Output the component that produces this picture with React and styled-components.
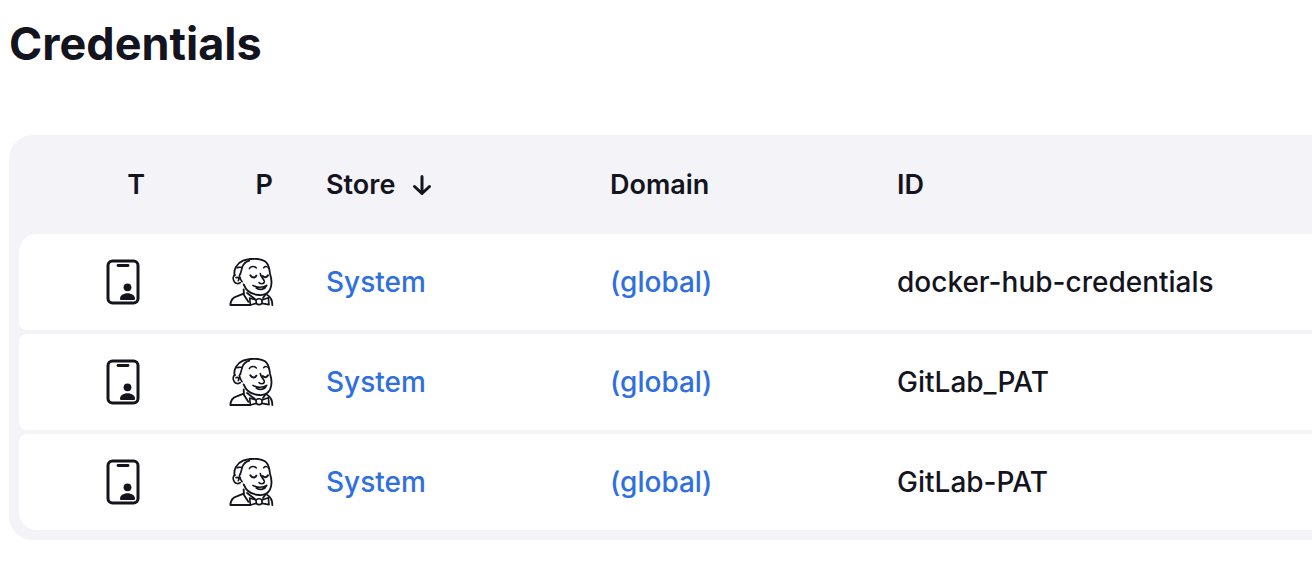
import React from "react";
import styled, { createGlobalStyle } from "styled-components";

const GlobalStyle = createGlobalStyle`
  * { box-sizing: border-box; }
  body {
    margin: 0;
    background: #fff;
    color: #14141f;
    font-family: Inter, "Liberation Sans", sans-serif;
    font-size: 28px;
    font-weight: 500;
    line-height: 36px;
  }
`;

const Page = styled.main`
  padding: 12px 0 26px 9px;
`;

const Title = styled.h1`
  margin: 0 0 59px;
  font-size: 45px;
  font-weight: 700;
  line-height: 64px;
`;

const Panel = styled.section`
  padding: 0 0 6px 10px;
  background: #f3f3f8;
  border-radius: 24px 0 0 24px;
`;

const Table = styled.table`
  width: 100%;
  table-layout: fixed;
  border-collapse: separate;
  border-spacing: 0 4px;
`;

const Column = styled.col`
  width: ${({ $width }) => $width};
`;

const HeaderCell = styled.th`
  height: 91px;
  padding: 0 0 0 ${({ $inset }) => $inset || "16px"};
  font-size: 27px;
  font-weight: 600;
  text-align: left;
`;

const SortButton = styled.button`
  display: flex;
  align-items: center;
  justify-content: ${({ $narrow }) => ($narrow ? "flex-end" : "flex-start")};
  gap: 15px;
  width: ${({ $narrow }) => ($narrow ? "46px" : "auto")};
  padding: 0;
  border: 0;
  background: none;
  color: inherit;
  font: inherit;
  cursor: pointer;
`;

const Cell = styled.td`
  height: 96px;
  padding: 0 0 0 ${({ $inset }) => $inset || "16px"};
  background: #fff;

  &:first-child { border-radius: 8px 0 0 8px; }
  tr:first-child > &:first-child { border-top-left-radius: 18px; }
  tr:last-child > &:first-child { border-bottom-left-radius: 18px; }
`;

const Link = styled.a`
  color: #2f6fe0;
  text-decoration: none;
`;

const Icon = styled.svg`
  display: block;
  width: 48px;
  height: 48px;
  fill: none;
  stroke: currentColor;
  stroke-linecap: round;
  stroke-linejoin: round;
`;

const Arrow = styled(Icon)`
  width: 24px;
  height: 24px;
`;

function BadgeIcon() {
  return (
    <Icon viewBox="0 0 48 48" strokeWidth="3" role="img" aria-label="Secret">
      <rect x="9" y="3" width="30" height="42" rx="4.500" />
      <path d="M19 7.500h10" strokeWidth="2.800" />
      <g fill="currentColor" stroke="none">
        <circle cx="28.500" cy="29.300" r="3.900" />
        <path d="M21 40.500c0-3 3.400-5.300 7.500-5.300s7.500 2.300 7.500 5.300c0 1-.5 1.600-1.500 1.600h-12c-1 0-1.500-.6-1.500-1.600z" />
      </g>
    </Icon>
  );
}

function JenkinsIcon() {
  return (
    <Icon viewBox="9 12 144 144" strokeWidth="5.500" role="img" aria-label="Jenkins">
      <path d="M32 64C28 47 38 28 57 20C78 12 109 12 123 22C136 31 136 48 138 59C143 74 145 91 138 107C132 118 119 124 106 123C82 122 66 110 59 91" />
      <path d="M76 20C63 24 56 33 54 43L49 60M39 41L54 39" strokeWidth="5" />
      <path d="M33 63C26 66 26 76 31 83C35 89 43 91 49 86M36 71C42 68 47 73 43 80M49 60L46 65L50 76L54 83" strokeWidth="5" />
      <path d="M76 44C80 36 90 35 97 42M119 41C123 36 131 37 135 43" strokeWidth="4.500" />
      <path d="M79 64C84 72 94 73 97 65M116 66C121 71 128 71 132 64" strokeWidth="6" />
      <path d="M109 59C110 72 123 76 121 84C119 91 110 90 105 86" strokeWidth="5" />
      <path d="M87 94C98 101 116 102 128 94C123 106 108 110 97 102" strokeWidth="5" />
      <path d="M59 106L60 123L73 143M59 119L38 127C24 131 20 139 19 153H79M69 117L92 134M126 119L117 132M130 123C140 129 145 139 145 153" />
      <path d="M96 138L77 132L79 153L97 148M114 138L133 131L135 152L114 148" strokeWidth="5" />
      <path d="M96 138C101 133 110 133 114 138L114 148C108 153 102 153 97 148Z" strokeWidth="5" />
    </Icon>
  );
}

function SortArrow() {
  return (
    <Arrow viewBox="0 0 24 24" strokeWidth="3" aria-hidden="true">
      <path d="M12 3.500v17M4.500 13.500l7.500 7 7.500-7" />
    </Arrow>
  );
}

const credentials = ["docker-hub-credentials", "GitLab_PAT", "GitLab-PAT"];

export default function App() {
  return (
    <>
      <GlobalStyle />
      <Page>
        <Title>Credentials</Title>
        <Panel>
          <Table>
            <colgroup>
              <Column $width="192px" />
              <Column $width="99px" />
              <Column $width="284px" />
              <Column $width="287px" />
              <Column $width="auto" />
            </colgroup>
            <thead>
              <tr>
                <HeaderCell $inset="80px"><SortButton $narrow>T</SortButton></HeaderCell>
                <HeaderCell><SortButton $narrow>P</SortButton></HeaderCell>
                <HeaderCell aria-sort="descending">
                  <SortButton>Store<SortArrow /></SortButton>
                </HeaderCell>
                <HeaderCell><SortButton>Domain</SortButton></HeaderCell>
                <HeaderCell><SortButton>ID</SortButton></HeaderCell>
              </tr>
            </thead>
            <tbody>
              {credentials.map((id) => (
                <tr key={id}>
                  <Cell $inset="80px"><BadgeIcon /></Cell>
                  <Cell><JenkinsIcon /></Cell>
                  <Cell><Link href="#system">System</Link></Cell>
                  <Cell><Link href="#global">(global)</Link></Cell>
                  <Cell>{id}</Cell>
                </tr>
              ))}
            </tbody>
          </Table>
        </Panel>
      </Page>
    </>
  );
}
